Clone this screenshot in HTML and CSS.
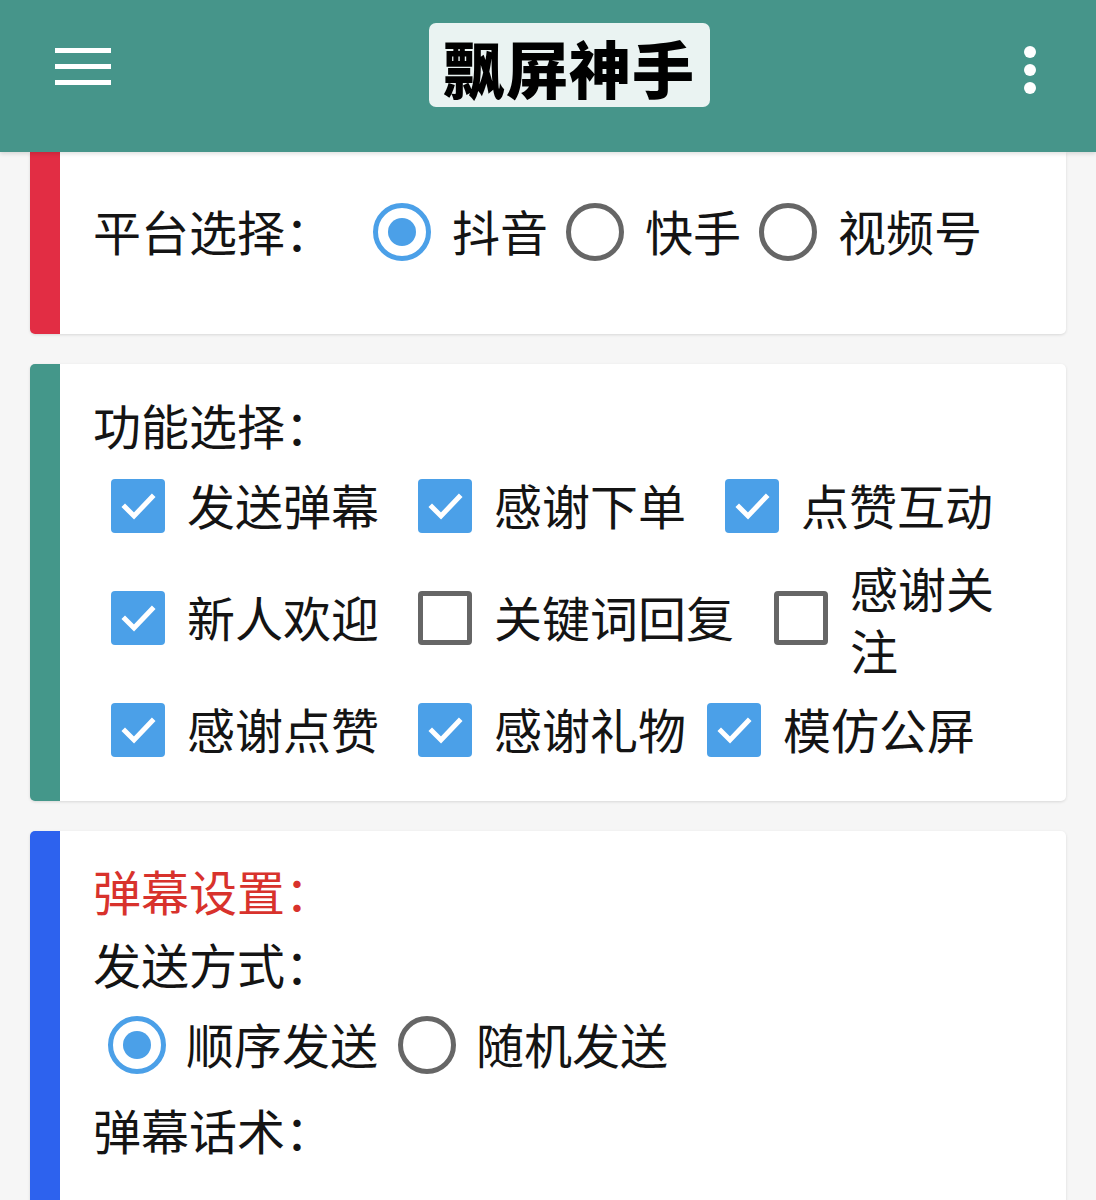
FILE: index.html
```html
<!DOCTYPE html>
<html lang="zh-CN">
<head>
<meta charset="utf-8">
<title>飘屏神手</title>
<link rel="stylesheet" href="styles.css">
</head>
<body>
<header class="appbar">
  <div class="menu-btn">
    <span class="bar"></span><span class="bar"></span><span class="bar"></span>
  </div>
  <div class="title-box"><h1 class="title">飘屏神手</h1></div>
  <div class="more-btn">
    <span class="dot"></span><span class="dot"></span><span class="dot"></span>
  </div>
</header>

<main class="content">
  <section class="card card-red card-first">
    <div class="platform-row">
      <span class="label">平台选择：</span>
      <div class="radio-group">
        <label class="radio-item"><span class="radio checked"></span><span class="opt">抖音</span></label>
        <label class="radio-item"><span class="radio"></span><span class="opt">快手</span></label>
        <label class="radio-item"><span class="radio"></span><span class="opt">视频号</span></label>
      </div>
    </div>
  </section>

  <section class="card card-teal">
    <div class="label section-title">功能选择：</div>
    <div class="check-row row-a">
      <label class="check-item"><span class="check on"><svg viewBox="0 0 54 54"><path d="M14 28 L23 37 L41 18"/></svg></span><span class="opt">发送弹幕</span></label>
      <label class="check-item"><span class="check on"><svg viewBox="0 0 54 54"><path d="M14 28 L23 37 L41 18"/></svg></span><span class="opt">感谢下单</span></label>
      <label class="check-item"><span class="check on"><svg viewBox="0 0 54 54"><path d="M14 28 L23 37 L41 18"/></svg></span><span class="opt">点赞互动</span></label>
    </div>
    <div class="check-row row-b">
      <label class="check-item"><span class="check on"><svg viewBox="0 0 54 54"><path d="M14 28 L23 37 L41 18"/></svg></span><span class="opt">新人欢迎</span></label>
      <label class="check-item"><span class="check"></span><span class="opt">关键词回复</span></label>
      <label class="check-item"><span class="check"></span><span class="opt opt-narrow">感谢关注</span></label>
    </div>
    <div class="check-row row-c">
      <label class="check-item"><span class="check on"><svg viewBox="0 0 54 54"><path d="M14 28 L23 37 L41 18"/></svg></span><span class="opt">感谢点赞</span></label>
      <label class="check-item"><span class="check on"><svg viewBox="0 0 54 54"><path d="M14 28 L23 37 L41 18"/></svg></span><span class="opt">感谢礼物</span></label>
      <label class="check-item"><span class="check on"><svg viewBox="0 0 54 54"><path d="M14 28 L23 37 L41 18"/></svg></span><span class="opt">模仿公屏</span></label>
    </div>
  </section>

  <section class="card card-blue">
    <div class="label red-title">弹幕设置：</div>
    <div class="label sub-label">发送方式：</div>
    <div class="radio-group send-row">
      <label class="radio-item"><span class="radio checked"></span><span class="opt">顺序发送</span></label>
      <label class="radio-item"><span class="radio"></span><span class="opt">随机发送</span></label>
    </div>
    <div class="label sub-label2">弹幕话术：</div>
  </section>
</main>
</body>
</html>
```

FILE: styles.css
```css
* { box-sizing: border-box; }

html, body {
  margin: 0;
  padding: 0;
}

body {
  background: #f6f6f6;
  font-family: "Noto Sans CJK SC", "Noto Sans", sans-serif;
  color: #141414;
  width: 1096px;
  overflow: hidden;
}

.appbar {
  height: 152px;
  background: #46958a;
  display: flex;
  align-items: center;
  justify-content: space-between;
  padding: 0 0 0 55px;
  position: relative;
  z-index: 2;
  box-shadow: 0 2px 4px rgba(0,0,0,0.12);
}

.menu-btn {
  width: 56px;
  display: flex;
  flex-direction: column;
  gap: 11px;
  margin-top: -20px;
}

.menu-btn .bar {
  display: block;
  height: 5px;
  background: #ffffff;
}

.title-box {
  background: #eaf3f2;
  border-radius: 7px;
  width: 281px;
  height: 84px;
  display: flex;
  align-items: center;
  justify-content: center;
  margin-top: -22px;
  margin-left: 3px;
}

.title {
  margin: 0;
  font-size: 62px;
  font-weight: 900;
  color: #000;
  letter-spacing: 1px;
  line-height: 1;
  padding-top: 4px;
}

.more-btn {
  width: 12px;
  display: flex;
  flex-direction: column;
  gap: 6px;
  margin-right: 60px;
  margin-top: -13px;
}

.more-btn .dot {
  width: 12px;
  height: 12px;
  border-radius: 50%;
  background: #fff;
}

.content {
  padding: 0 30px 0 30px;
  display: flex;
  flex-direction: column;
  gap: 30px;
}

.card {
  background: #fff;
  border-radius: 5px;
  border-left: 30px solid #e22d44;
  box-shadow: 0 1px 3px rgba(0,0,0,0.12);
  padding-left: 33px;
}

.card-first {
  border-top-left-radius: 0;
  border-top-right-radius: 0;
  height: 182px;
  padding-top: 41px;
}

.card-teal { border-left-color: #44978a; padding-top: 28px; padding-bottom: 21px; }
.card-blue { border-left-color: #2d62ee; padding-top: 27px; height: 420px; border-bottom-left-radius: 0; border-bottom-right-radius: 0; }

.label {
  font-size: 48px;
  line-height: 64px;
  color: #141414;
}

.platform-row {
  display: flex;
  align-items: center;
  height: 78px;
}

.platform-row .label {
  width: 280px;
  padding-bottom: 5px;
}

.radio-group {
  display: flex;
  align-items: center;
}

.radio-item {
  display: flex;
  align-items: center;
  margin-right: 18px;
}

.radio {
  width: 58px;
  height: 58px;
  border-radius: 50%;
  border: 5px solid #666;
  display: flex;
  align-items: center;
  justify-content: center;
  margin-right: 21px;
}

.radio.checked {
  border-color: #4ba0e8;
}

.radio.checked::after {
  content: "";
  width: 28px;
  height: 28px;
  border-radius: 50%;
  background: #4ba0e8;
}

.opt {
  font-size: 48px;
  line-height: 62px;
  color: #141414;
  padding-bottom: 5px;
}

.check-row {
  display: grid;
  align-items: center;
  min-height: 100px;
  margin-left: 18px;
}

.row-a { grid-template-columns: 307px 307px 1fr; }
.row-b { grid-template-columns: 307px 356px 1fr; min-height: 124px; }
.row-c { grid-template-columns: 307px 289px 1fr; }

.check-item {
  display: flex;
  align-items: center;
}

.check {
  width: 54px;
  height: 54px;
  flex: none;
  border-radius: 4px;
  border: 5px solid #666;
  margin-right: 22px;
  display: flex;
}

.check.on {
  background: #4ba0e8;
  border: none;
}

.check svg {
  width: 54px;
  height: 54px;
}

.check svg path {
  fill: none;
  stroke: #fff;
  stroke-width: 5;
  stroke-linecap: square;
}

.opt-narrow {
  width: 150px;
  padding-bottom: 0;
}

.red-title {
  color: #d8322c;
}

.sub-label { margin-top: 9px; }

.send-row {
  height: 84px;
  margin-top: 8px;
  margin-left: 15px;
}

.send-row .radio { margin-right: 20px; }
.send-row .radio-item { margin-right: 20px; }

.sub-label2 { margin-top: 10px; }
```
